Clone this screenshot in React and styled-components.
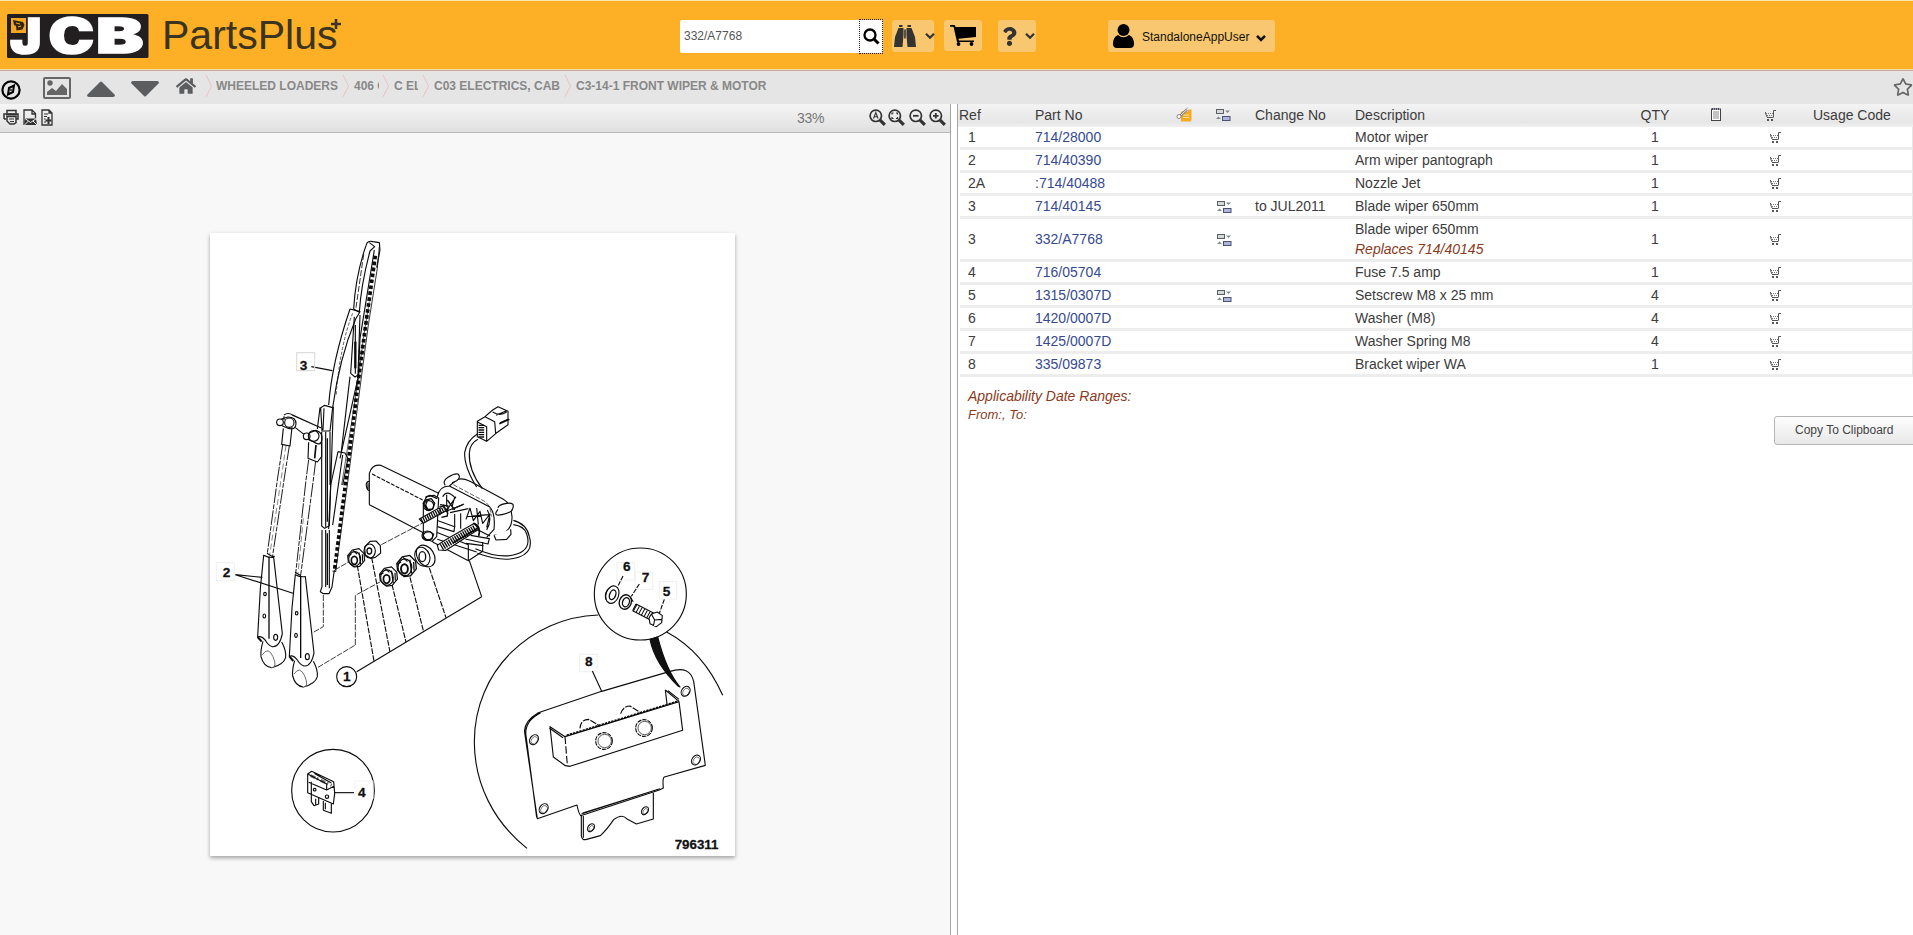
import React from "react";
import styled, { createGlobalStyle } from "styled-components";
import { FaHome, FaQuestion, FaRegStar } from "react-icons/fa";

const Global = createGlobalStyle`
  *{box-sizing:border-box}
  html,body{margin:0;padding:0;overflow:hidden;background:#fff}
  body{font-family:"Liberation Sans",Arial,sans-serif;font-size:14px;color:#3c3c3c}
  svg{display:block;flex:none}
`;

const Page = styled.div`display:flex;flex-direction:column;width:1913px;height:935px;overflow:hidden;background:#fff;`;

const Header = styled.header`
  display:flex;align-items:flex-start;height:71px;flex:none;background:#fdaf25;
  border-top:1px solid #fbe6b0;border-bottom:1px solid #c9a9a6;box-shadow:inset 0 -1px #f8dca8;
`;
const Logo = styled.div`margin:13px 0 0 7px;svg{overflow:visible}`;
const Brand = styled.div`
  display:flex;width:518px;margin:11px 0 0 13px;font-size:41px;line-height:46px;color:#3a3420;
`;
const Plus = styled.svg`margin:7px 0 0 -6px;`;
const SearchBox = styled.div`
  display:flex;width:203px;height:33px;margin:19px 9px 0 0;background:#fff;border-radius:2px;
`;
const SearchText = styled.div`width:179px;padding-left:4px;font-size:12px;line-height:32px;color:#555;`;
const SearchButton = styled.div`
  display:flex;align-items:center;justify-content:center;width:24px;height:35px;margin-top:-1px;border:1px dotted #222;
`;
const HeaderButton = styled.div`
  display:flex;align-items:center;width:${p => p.$w}px;height:${p => p.$h || 32}px;
  margin:19px ${p => p.$gap || 0}px 0 0;padding-left:${p => p.$pad || 0}px;gap:${p => p.$inner || 0}px;
  border-radius:3px;background:#f8c76f;color:${p => p.$color || "#333"};font-size:12px;
`;
const UserName = styled.span`padding-top:1px;`;
const UserArrow = styled.span`margin:4px 0 0 -1px;`;

const NavBar = styled.nav`display:flex;align-items:center;height:33px;flex:none;background:#e5e5e5;color:#5b5d5f;`;
const NavIcon = styled.div`display:flex;width:${p => p.$w}px;padding:${p => p.$top || 0}px 0 ${p => p.$bottom || 0}px ${p => p.$left || 0}px;flex:none;`;
const Crumb = styled.div`
  width:${p => p.$w}px;margin:0 ${p => p.$after ?? 5}px 0 ${p => p.$before ?? 4}px;padding-bottom:4px;
  overflow:hidden;white-space:nowrap;font-size:12px;font-weight:bold;color:#888;
`;
const Divider = styled.svg`margin-top:-4px;`;
const Spacer = styled.div`flex:1;`;
const StarSlot = styled.div`width:20px;margin-bottom:1px;overflow:visible;color:#666;`;

const Body = styled.main`display:flex;flex:1;min-height:0;`;
const DrawingPane = styled.section`
  display:flex;flex-direction:column;width:951px;border-right:1px solid #a5a5a5;background:#f8f8f8;
`;
const ToolBar = styled.div`
  display:flex;height:29px;flex:none;padding:5px 3px 0 3px;border-bottom:1px solid #b9b9b9;
  background:linear-gradient(#f5f5f5,#e0e0e0);
`;
const Tool = styled.div`width:${p => p.$w}px;flex:none;`;
const ZoomLevel = styled.div`width:72px;flex:none;line-height:18px;font-size:14px;color:#777;letter-spacing:-.3px;`;
const Sheet = styled.div`
  width:525px;height:623px;margin:100px 0 0 210px;background:#fff;box-shadow:0 2px 4px rgba(0,0,0,.35);
`;

const ListPane = styled.section`flex:1;min-width:0;margin-left:6px;border-left:1px solid #a5a5a5;background:#fff;`;
const Row = styled.div`
  display:grid;grid-template-columns:67px 131px 38px 51px 100px 250px 100px 23px 80px 1fr;align-items:center;
  height:${p => (p.$tall ? 43 : 23)}px;margin-left:2px;padding-left:8px;border-bottom:3px solid #ededed;border-right:1px solid #e6e6e6;white-space:nowrap;
`;
const HeadRow = styled(Row)`
  grid-template-columns:76px 131px 38px 51px 100px 250px 100px 23px 80px 1fr;
  margin-left:0;padding:0 0 2px 1px;border:0;background:linear-gradient(#f3f3f3,#e6e6e6 80%,#f1f1f1);
`;
const Cell = styled.div`padding-left:${p => p.$left || 0}px;line-height:20px;`;
const PartLink = styled.a`color:#364a92;`;
const Qty = styled.div`text-align:center;`;
const Replaces = styled.div`color:#8a3a1c;font-style:italic;line-height:20px;`;
const Notes = styled.div`padding:9px 0 0 10px;color:#8a3a1c;font-style:italic;line-height:20px;`;
const Range = styled.div`font-size:13px;line-height:18px;`;
const CopyButton = styled.div`
  width:142px;height:29px;margin:-8px 0 0 816px;border:1px solid #b5b5b5;border-radius:3px;padding-left:20px;
  background:linear-gradient(#fdfdfd,#e8e8e8);font-size:12px;line-height:26px;color:#444;white-space:nowrap;
`;

const Chevron = ({ color = "#333", w = 2.2 }) => (
  <svg width="10" height="8" viewBox="0 0 10 8" fill="none" stroke={color} strokeWidth={w}><path d="M1 1.800l4 4 4-4" /></svg>
);
const Separator = () => (
  <Divider width="8" height="22" viewBox="0 0 8 22" fill="none" stroke="#efb5b5" strokeDasharray="1.5 .5"><path d="M1 0l5.500 11L1 22" /></Divider>
);
const Binoculars = () => (
  <svg width="22" height="23" viewBox="0 0 22 23" fill="#333">
    <path d="M5 0h3.500v2H5zM13.500 0H17v2h-3.500zM4.500 3h5v7l-1 12H0L1 12zM12.500 3h5L21 12l1 10h-8.500l-1-12zM10.200 4.500h1.600v9h-1.600z" />
  </svg>
);
const BigCart = () => (
  <svg width="26" height="21" viewBox="0 0 26 21" fill="#000">
    <path d="M0 0h4.500l1.200 2H26v10L8.500 13.800l.4 1.700H24v1.600H7L3.500 1.800H0z" /><circle cx="8.500" cy="19" r="1.900" /><circle cx="21.500" cy="19" r="1.900" />
  </svg>
);
const MiniCart = () => (
  <svg width="11" height="12" viewBox="0 0 11 12" fill="none" stroke="#555">
    <path d="M11 1.500H8.500V8.500M2 8.500h6M.5 3v1.500L2 8" />
    <path d="M1 4.500h7M2 6.500h6" stroke="#777" strokeDasharray="1 1" /><path d="M2 11h2M6 11h2" strokeWidth="1.600" stroke="#222" />
  </svg>
);
const Supersede = () => (
  <svg width="15" height="13" viewBox="0 0 15 13">
    <rect x=".5" y="1.500" width="7" height="4" fill="#d5d8d5" stroke="#5a5f63" /><rect x="6.500" y="8.500" width="7.500" height="4" fill="#aeb4dc" stroke="#4b5170" />
    <path d="M9 2.500h5l-2.500 2.500zM0 11h5L2.500 8.500z" fill="#7d8a8e" />
  </svg>
);
const KitIcon = () => (
  <svg width="17" height="15" viewBox="0 0 17 15">
    <path d="M5 4.500h7v-2h3.500V13l-1 1.500H5z" fill="#f5aa24" /><path d="M7 8h6M7 10.500h6" stroke="#fbe0a2" />
    <path d="M3.500 9.500L11 2.500" stroke="#777" strokeWidth="2.400" /><path d="M3.500 9.500L11 2.500" stroke="#fff" />
    <circle cx="3" cy="9.500" r="2" fill="#fff" stroke="#888" /><path d="M10 3l1.500-2.500" stroke="#aaa" />
  </svg>
);
const NoteIcon = () => (
  <svg width="10" height="13" viewBox="0 0 10 13"><rect x=".5" y="1" width="9" height="11.500" fill="#fff" stroke="#444" /><path d="M2 4h6M2 6h6M2 8h6M2 10h6" stroke="#888" /><path d="M1 1h8" stroke="#446" strokeDasharray="1 1" strokeWidth="2" /></svg>
);
const Lens = ({ kind }) => (
  <svg width="17" height="17" viewBox="0 0 17 17" fill="none" stroke="#333">
    <circle cx="6.800" cy="6.800" r="5.700" strokeWidth="1.700" /><path d="M10.800 10.800l5 5" strokeWidth="3.200" />
    {kind === "auto" && <path d="M4.500 9.500L6.800 3.500l2.300 6M5.300 7.800h3" strokeWidth="1.100" />}
    {kind === "fit" && <path d="M4 5.500V4h1.500M8 4h1.500v1.500M9.500 8v1.500H8M5.500 9.500H4V8" strokeWidth="1.200" />}
    {kind === "out" && <path d="M4 6.800h5.600" strokeWidth="1.800" />}
    {kind === "in" && <path d="M4 6.800h5.600M6.800 4v5.600" strokeWidth="1.800" />}
  </svg>
);

const JcbLogo = () => (
  <svg width="142" height="44" viewBox="7 14 142 44">
    <rect x="7" y="14" width="141.500" height="44" rx="1.500" fill="#231f20" />
    <g fill="#fff" stroke="#fff" strokeWidth="1.600" fontFamily="Inter, sans-serif" fontWeight="900" fontSize="48">
      <text transform="translate(10 53.200) scale(1.100 1)">J</text>
      <text transform="translate(48.500 53.200) scale(1.270 1)">C</text>
      <text transform="translate(96 53.200) scale(1.480 1)">B</text>
    </g>
    <rect x="11" y="18" width="15" height="15" fill="#f5a623" />
    <path d="M13 20l10 2 1.500 3-2 4.500-6 1L16 26l-2-1z" fill="#33240f" /><path d="M16 23l4 1M18 27l3-1" stroke="#f5a623" />
  </svg>
);

const Label = ({ x, y, children, boxed }) => (
  <g>
    {boxed && <rect x={x - 9} y={y - 47} width="54" height="54" fill="none" stroke={boxed} strokeWidth="3" />}
    <text x={x} y={y} fontSize="41" fontWeight="bold" fill="#111" stroke="#111" strokeWidth=".8">{children}</text>
  </g>
);

const Nut = ({ x, y, s = 1 }) => (
  <g transform={`translate(${x} ${y}) scale(${s})`}>
    <path d="M-24-10L-10-27 10-31 25-16 27 4 12 22-5 24-22 8z" fill="#fff" />
    <ellipse cx="-3" cy="0" rx="18" ry="22" /><ellipse cx="-4" cy="4" rx="9" ry="12" strokeWidth="5" />
    <path d="M-8-26L4-15M10-20l5 36M-23-8l10-6M20-14l1 22" />
  </g>
);

const PlainNut = ({ x, y }) => (
  <g transform={`translate(${x} ${y})`}>
    <path d="M-22-10L-6-27 12-28 25-14 26 8 10 21-4 24-20 14z" fill="#fff" />
    <ellipse cx="-7" cy="2" rx="17" ry="21" /><ellipse cx="-8" cy="2" rx="7" ry="9" strokeWidth="4" />
  </g>
);

const ArmFoot = ({ x, y }) => (
  <g transform={`translate(${x} ${y})`} fill="#fff">
    <path d="M16 258Q8 285 10 304Q18 335 42 337Q78 328 84 306Q86 285 72 260" />
    <path d="M18 0Q32 8 48 6L74 235Q66 276 44 274Q32 270 24 256Q12 240 0 245L8 100z" />
    <path d="M34 4V250" strokeWidth="4" /><ellipse cx="22" cy="116" rx="4" ry="5" /><ellipse cx="20" cy="182" rx="4" ry="6" /><ellipse cx="54" cy="246" rx="6" ry="9" />
    <path d="M14 298q18-26 32 6t-4 33" strokeWidth="1.800" /><path d="M0 245l12 14" strokeWidth="6" />
  </g>
);

const Wiper = () => (
  <g>
    <path d="M498 62Q502 45 519 50L538 53 540 75 530 128M498 62Q467 150 461 252L478 262Q483 180 510 78L524 65 508 53" />
    <path d="M523 75L480 340 475 455 420 700" />
    <path d="M526 92L497 300 476 460 436 780 403 1040" strokeWidth="11" strokeDasharray="11 7" />
    <path d="M538 65L532 130 505 300 485 450 442 780 407 1040" strokeWidth="2.500" /><path d="M508 230L490 340 474 470 425 780" strokeWidth="2" />
    <path d="M491 88L468 248" strokeDasharray="18 6" strokeWidth="2.500" />
    <path d="M450 252L480 260 467 282Q418 400 398 548M450 252Q396 410 386 540" /><path d="M458 265Q420 360 408 515" strokeDasharray="10 5" strokeWidth="2" />
    <path d="M463 275L452 445 465 456 474 450 480 270M466 300v146" /><path d="M466 350v80" strokeWidth="7" />
    <path d="M362 548L374 541 398 548 390 618 366 618zM360 548L352 612M372 550L369 615" />
    <path d="M365 620V903L374 910 388 902 400 545M377 620V905M390 620V780M450 455L424 680" />
    <path d="M382 640V890" strokeWidth="4" /><path d="M414 680L435 684 444 700 428 780M414 680L392 780 386 912M428 690L398 900" />
    <path d="M366 915V1085L361 1100 370 1106 387 1106 396 1086 403 1035M377 915V1086M388 915V1090" /><path d="M382 925V1080" strokeWidth="4" />
    <path d="M252 570Q264 561 278 570L364 609M252 574V585M286 608L312 628M276 570L352 604" />
    <circle cx="240" cy="592" r="10" /><path d="M244 582L264 576Q288 576 288 596T264 610L246 602" /><circle cx="268" cy="593" r="14" />
    <path d="M250 610L245 658 270 663 276 606" /><circle cx="320" cy="634" r="10" /><path d="M328 624L348 616Q369 622 366 644T340 650L326 644" /><circle cx="341" cy="633" r="16" />
    <path d="M326 652L324 700 352 711 365 695V652" /><path d="M348 660L344 700" strokeWidth="5" />
    <path d="M248 660L232 765 202 985M268 662L252 765 217 998M326 704L318 765 287 1046M347 708L340 765 302 1050" strokeDasharray="44 4 14 4" strokeWidth="2.800" />
    <path d="M258 662L243 765 209 990M310 880L294 1046" strokeDasharray="18 9" strokeWidth="1.500" />
    <path d="M201 985L218 995 224 994M285 1042L303 1052" />
    <path d="M334 425L397 437" />
  </g>
);

const Motor = () => (
  <g>
    <path d="M28 374L28 280Q36 252 62 256L236 340M28 374L190 458" />
    <path d="M36 282L188 360" strokeDasharray="12 4" /><path d="M27 304q-10 2-8 14t8 14M24 310v18" />
    <path d="M232 350Q238 318 268 318L388 380Q407 398 402 448L380 472M232 350V410M268 318L290 300Q304 292 330 304L430 358Q452 370 456 410Q457 446 428 462L402 466" fill="#fff" />
    <path d="M256 316Q246 304 264 292T294 282Q304 292 290 302L276 308M414 384Q414 374 440 370T458 386Q456 398 426 404T414 388M402 466L408 480 440 478 453 463 452 448" fill="#fff" />
    <path d="M280 314L370 362Q393 374 394 410" strokeDasharray="14 5" strokeWidth="2" />
    <path d="M248 350q12-22 36 2l-8 28M260 344v36M288 350l-30 44 50-20M270 398l55-12M284 402v40M302 400v46M330 384l-12 34M330 384l10 38 20-28 8 36 22-28-10 40M320 410l66-6M382 390q16 28-2 60M350 384l5 50M342 444l48 24" />
    <path d="M228 420L284 440 282 455 232 440zM218 486L325 542 368 514V486M325 542V494L218 452 218 486M232 478L350 516" />
    <path d="M190 368L200 350 222 346 236 354 230 470 216 484 190 475z" fill="#fff" />
    <circle cx="206" cy="377" r="15" /><path d="M190 370l8-10 16-4 10 14-6 17-18 2zM202 362l-5 13 6 13M196 352l14-6 22 10" strokeWidth="4" />
    <ellipse cx="202" cy="467" rx="16" ry="14" /><path d="M196 457l-7 9 10 14 17-3 5-14-11-8z" />
    <path d="M178 417L248 378 262 390 190 430zM240 378v28M250 374l14 28" fill="#fff" /><path d="M184 423L255 387" strokeWidth="16" strokeDasharray="4 3" />
    <path d="M240 374l24 4-2 30-18 4M276 388l36-16M262 360l22 30" strokeWidth="4" />
    <path d="M232 496L256 480 343 430 356 448 258 511 236 510z" fill="#fff" /><path d="M244 502L346 443" strokeWidth="19" strokeDasharray="4 3" /><path d="M280 488l74-44M340 430q24 7 16 38" strokeWidth="5" />
    <path d="M316 477L384 492 388 476 332 466M318 490l52 7" strokeWidth="3.500" />
    <path d="M346 506Q420 538 468 523T500 462Q493 438 460 434M352 520Q430 548 476 532T508 470Q501 432 460 421" />
    <path d="M352 162Q320 182 314 218Q312 260 350 321M354 178Q330 190 328 218Q325 270 367 326" />
    <path d="M352 124L375 110 398 90 414 80 444 94V134L408 160 380 184 352 170zM352 126L380 140V183M375 110L404 125 407 160M398 96q22 14 42 0M408 106l32-14M420 128l24-10" />
    <path d="M364 134v40" strokeWidth="17" strokeDasharray="4 3" /><path d="M418 131L448 118" strokeWidth="5" />
  </g>
);

const Diagram = () => (
  <svg width="525" height="622" viewBox="210 233 525 622" fill="none" stroke="#0c0c0c" strokeWidth="3.400" strokeLinejoin="round" fontFamily="Liberation Sans, Arial, sans-serif">
    <g transform="translate(200 225) scale(.333333)">
      <Wiper /><rect x="290" y="383" width="54" height="54" stroke="#ddd" /><Label x={299} y={435}>3</Label>
    </g>
    <g transform="translate(200 480) scale(.333333)">
      <ArmFoot x={173} y={226} /><ArmFoot x={268} y={284} />
      <path d="M106 284L187 292M106 284L279 340" /><rect x="49" y="248" width="54" height="54" stroke="#f1f1f1" /><Label x={68} y={291}>2</Label>
      <path d="M404 270L446 246M466 495V346L540 306M354 562L466 495M544 194L666 130M370 345V440L338 458" strokeDasharray="18 4" strokeWidth="2.400" />
      <path d="M470 575L845 350M808 242L845 350" /><path d="M472 257L522 543M515 233L570 516M576 314L618 486M630 292L671 456M688 264L738 413" strokeDasharray="17 4" />
      <Nut x={467} y={237} /><PlainNut x={516} y={211} /><Nut x={564} y={293} s={1.05} /><Nut x={618} y={262} s={1.15} />
      <ellipse cx="677" cy="228" rx="25" ry="35" transform="rotate(-32 677 228)" /><ellipse cx="667" cy="230" rx="22" ry="29" transform="rotate(-20 667 230)" /><ellipse cx="667" cy="230" rx="10" ry="15" strokeWidth="4" />
      <circle cx="440" cy="590" r="30" /><Label x={429} y={603}>1</Label>
      <circle cx="399" cy="932" r="124" />
      <path d="M323 882L335 874 401 905 404 940 400 972 323 938zM323 882L380 912V930L402 919M380 930L326 907M334 905V943M342 880l52 29" fill="#fff" />
      <path d="M334 944V965L342 977 356 972V951M370 963V991L394 1000V971M376 968v20M347 956v20" /><circle cx="344" cy="929" r="4" /><circle cx="381" cy="950" r="5" />
      <path d="M332 887L395 916" strokeWidth="9" strokeDasharray="15 5 5 8" strokeOpacity=".6" /><path d="M404 938H462" /><Label x={474} y={950} boxed="#f4f4f4">4</Label>
    </g>
    <g transform="translate(360 380) scale(.333333)"><Motor /></g>
    <g transform="translate(460 530) scale(.333333)">
      <circle cx="541" cy="192" r="138" />
      <path d="M415 255C210 262 43 425 43 635C43 760 100 875 201 955M620 306Q730 365 788 496" />
      <path d="M570 328Q585 401 655 469L660 471Q620 425 593 321z" fill="#111" />
      <path d="M235 548L425 484 630 424Q690 405 701 454L736 706 613 741Q607 745 610 774L598 780 362 857Q356 851 351 825L232 866 194 608Q190 575 235 548zM230 862L198 617Q192 574 242 548" />
      <path d="M364 857V918Q366 932 380 928L421 917Q440 900 461 869Q485 850 500 866L529 882 580 867V788M370 858V923M600 776L368 849M590 779L364 852" />
      <path d="M270 590L315 620 657 515 668 601 330 709 316 707 280 681zM268 594L309 623M616 480L657 514M616 480L621 522M624 482L657 508" /><path d="M315 620L322 705" strokeDasharray="22 7" /><path d="M320 616L655 513" strokeWidth="5" strokeDasharray="7 3" />
      <circle cx="432" cy="633" r="25" strokeDasharray="13 3" /><circle cx="552" cy="594" r="25" strokeDasharray="13 3" />
      <circle cx="434" cy="633" r="20" strokeWidth="2" /><circle cx="554" cy="594" r="20" strokeWidth="2" />
      <path d="M360 595Q362 568 386 568L420 588M482 551Q490 528 510 528L542 548" strokeDasharray="20 4" />
      {[[222, 629, 13], [677, 484, 13], [708, 690, 13], [251, 836, 13], [393, 893, 10], [555, 842, 10]].map(([x, y, r]) => (
        <g key={x} transform={`rotate(35 ${x} ${y})`}><ellipse cx={x} cy={y} rx={r - 1} ry={r + 3} /><ellipse cx={x + 2} cy={y + 1} rx={r - 4} ry={r - 1} strokeWidth="1.500" /></g>
      ))}
      <g stroke="#f1f1f1"><rect x="471" y="98" width="52" height="52" /><rect x="526" y="126" width="52" height="52" /><rect x="598" y="155" width="52" height="52" /><rect x="359" y="373" width="52" height="52" /></g>
      <g transform="rotate(20 457 194)"><ellipse cx="457" cy="194" rx="19" ry="27" /><ellipse cx="458" cy="194" rx="9" ry="15" strokeWidth="4" /><path d="M444 174q-14 23 0 40" /></g>
      <g transform="rotate(20 496 216)"><ellipse cx="496" cy="216" rx="18" ry="22" strokeWidth="4" /><ellipse cx="498" cy="216" rx="10" ry="14" strokeWidth="4" /><path d="M506 198l12 9" /></g>
      <path d="M528 222L582 250M518 242L570 269M528 222L518 242" /><path d="M524 233L574 260" strokeWidth="21" strokeDasharray="3 6" />
      <path d="M574 252L592 246 607 257 605 278 589 290 570 281 567 264zM574 252L584 270 605 268M584 270L580 288" fill="#fff" />
      <path d="M489 138L473 170M538 162L514 199M613 208L598 250" strokeDasharray="14 4" /><path d="M397 423L425 484" />
      <Label x={489} y={123}>6</Label><Label x={545} y={155}>7</Label><Label x={608} y={197}>5</Label><Label x={375} y={408}>8</Label>
      <text x="644" y="957" fontSize="40" fontWeight="bold" fill="#111" stroke="#111" strokeWidth=".8">796311</text>
    </g>
  </svg>
);

const parts = [
  ["1", "714/28000", "Motor wiper", "1"],
  ["2", "714/40390", "Arm wiper pantograph", "1"],
  ["2A", ":714/40488", "Nozzle Jet", "1"],
  ["3", "714/40145", "Blade wiper 650mm", "1", true, "to JUL2011"],
  ["3", "332/A7768", "Blade wiper 650mm", "1", true, "", "Replaces 714/40145"],
  ["4", "716/05704", "Fuse 7.5 amp", "1"],
  ["5", "1315/0307D", "Setscrew M8 x 25 mm", "4", true],
  ["6", "1420/0007D", "Washer (M8)", "4"],
  ["7", "1425/0007D", "Washer Spring M8", "4"],
  ["8", "335/09873", "Bracket wiper WA", "1"],
];

export default function App() {
  return (
    <Page>
      <Global />
      <Header>
        <Logo><JcbLogo /></Logo>
        <Brand>PartsPlus<Plus width="10" height="10" viewBox="0 0 10 10" stroke="#3a3420" strokeWidth="2.600"><path d="M5 0v10M0 5h10" /></Plus></Brand>
        <SearchBox>
          <SearchText>332/A7768</SearchText>
          <SearchButton><svg width="17" height="17" viewBox="0 0 17 17" fill="none" stroke="#000"><circle cx="7" cy="7" r="5.500" strokeWidth="2.300" /><path d="M11 11l4.500 4.500" strokeWidth="3" /></svg></SearchButton>
        </SearchBox>
        <HeaderButton $w={42} $gap={10} $pad={2} $inner={9}><Binoculars /><Chevron /></HeaderButton>
        <HeaderButton $w={38} $h={31} $gap={16} $pad={6}><BigCart /></HeaderButton>
        <HeaderButton $w={38} $gap={72} $pad={2} $inner={6}><FaQuestion size={19} /><Chevron /></HeaderButton>
        <HeaderButton $w={167} $pad={5} $inner={8} $color="#111">
          <svg width="21" height="24" viewBox="0 0 21 24" fill="#000"><circle cx="10.500" cy="6" r="6" /><path d="M5 11Q10.500 15.500 16 11Q21 13 21 20Q21 24 17 24H4Q0 24 0 20Q0 13 5 11z" /></svg>
          <UserName>StandaloneAppUser</UserName>
          <UserArrow><Chevron color="#111" w={2.600} /></UserArrow>
        </HeaderButton>
      </Header>
      <NavBar>
        <NavIcon $w={43} $left={1} $top={4}><svg width="20" height="20" viewBox="0 0 20 20" fill="none" stroke="#000"><circle cx="10" cy="10" r="8.600" strokeWidth="2.200" /><path d="M13 5.500L12 12l-5 2.500L8 8z" strokeWidth="2" /><circle cx="10" cy="10" r=".6" /></svg></NavIcon>
        <NavIcon $w={44} $top={1}><svg width="28" height="22" viewBox="0 0 28 22" fill="#666"><rect x="1" y="1" width="26" height="20" rx="1" fill="none" stroke="#666" strokeWidth="2" /><circle cx="7" cy="6" r="2.700" /><path d="M4 18v-3l5-4 4 3 6-7 5 5v6z" /></svg></NavIcon>
        <NavIcon $w={44} $top={2}><svg width="28" height="16" viewBox="0 0 28 16" fill="#5b5d5f"><path d="M13 1q1-1 2 0l13 13q0 2-2 2H2q-2 0-2-2z" /></svg></NavIcon>
        <NavIcon $w={45} $top={2}><svg width="28" height="16" viewBox="0 0 28 16" fill="#5b5d5f"><path d="M13 15q1 1 2 0L28 2q0-2-2-2H2Q0 0 0 2z" /></svg></NavIcon>
        <NavIcon $w={29} $bottom={3}><FaHome size={20} /></NavIcon>
        <Separator /><Crumb $w={122} $before={3} $after={4}>WHEELED LOADERS</Crumb>
        <Separator /><Crumb $w={25} $after={3}>406 C</Crumb>
        <Separator /><Crumb $w={24} $after={4}>C EL</Crumb>
        <Separator /><Crumb $w={127} $after={3}>C03 ELECTRICS, CAB</Crumb>
        <Separator /><Crumb $w={200}>C3-14-1 FRONT WIPER &amp; MOTOR</Crumb>
        <Spacer /><StarSlot><FaRegStar size={20} /></StarSlot>
      </NavBar>
      <Body>
        <DrawingPane>
          <ToolBar>
            <Tool $w={20}><svg width="16" height="17" viewBox="0 0 16 17" fill="none" stroke="#333" strokeWidth="1.500"><path d="M4 4V1.500h9V4M1 10V5h14v5h-2M3 10H1M4 7.500h9v6L11 15H7l-3-3z" /><path d="M3 5.500h11" strokeWidth="2" /><path d="M6 10h5M7 12.500h4" strokeWidth="1" /></svg></Tool>
            <Tool $w={18}><svg width="14" height="17" viewBox="0 0 14 17"><path d="M1 16V1h8l3.500 3.500V9M9 1v4h3" fill="none" stroke="#333" strokeWidth="1.300" /><path d="M2 9.500h11L14 16H1z" fill="#333" /><path d="M2 9.500l5.500 4 6-4M1.500 16l4-4m8.500 4l-4-4" stroke="#eee" fill="none" /></svg></Tool>
            <Tool $w={756}><svg width="12" height="17" viewBox="0 0 12 17" fill="none" stroke="#333" strokeWidth="1.300"><path d="M1 1h7l3 3v12H1zM8 1v3h3" /><path d="M3 5h4M3 7.500h3M3 10h1.500M3 13h2" strokeWidth="1" /><path d="M7.500 8v7M4.500 11.500h6" strokeWidth="2" /></svg></Tool>
            <ZoomLevel>33%</ZoomLevel>
            <Tool $w={19}><Lens kind="auto" /></Tool><Tool $w={21}><Lens kind="fit" /></Tool><Tool $w={20}><Lens kind="out" /></Tool><Tool $w={17}><Lens kind="in" /></Tool>
          </ToolBar>
          <Sheet><Diagram /></Sheet>
        </DrawingPane>
        <ListPane>
          <HeadRow>
            <Cell>Ref</Cell><Cell>Part No</Cell><Cell $left={10}><KitIcon /></Cell><Cell $left={12}><Supersede /></Cell><Cell>Change No</Cell>
            <Cell>Description</Cell><Qty>QTY</Qty><Cell $left={6}><NoteIcon /></Cell><Cell $left={37}><MiniCart /></Cell><Cell $left={5}>Usage Code</Cell>
          </HeadRow>
          {parts.map(([ref, no, desc, qty, sup, change, replaces]) => (
            <Row key={no} $tall={!!replaces}>
              <Cell>{ref}</Cell><PartLink>{no}</PartLink><Cell /><Cell $left={13}>{sup && <Supersede />}</Cell><Cell>{change}</Cell>
              <Cell>{desc}{replaces && <Replaces>{replaces}</Replaces>}</Cell><Qty>{qty}</Qty><Cell /><Cell $left={42}><MiniCart /></Cell><Cell />
            </Row>
          ))}
          <Notes>Applicability Date Ranges:<Range>From:, To:</Range></Notes>
          <CopyButton>Copy To Clipboard</CopyButton>
        </ListPane>
      </Body>
    </Page>
  );
}
